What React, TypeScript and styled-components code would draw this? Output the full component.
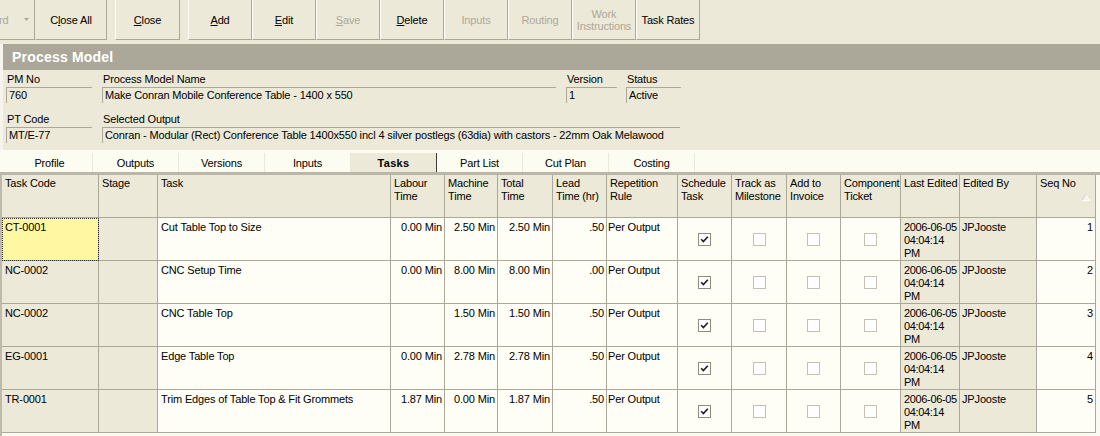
import React from "react";
import styled, { createGlobalStyle } from "styled-components";

const GlobalStyle = createGlobalStyle`
  html, body {
    margin: 0;
    padding: 0;
    background: #ece9d8;
  }
  body {
    font-family: "Liberation Sans", Arial, sans-serif;
    font-size: 11px;
    letter-spacing: -0.15px;
    color: #000;
    overflow: hidden;
  }
  * { box-sizing: border-box; }
`;

const BG = "#ece9d8";
const SHADOW = "#aca899";
const CREAM = "#fffef6";
const DISABLED = "#aca899";

const Page = styled.div`
  width: 1100px;
  height: 436px;
  overflow: hidden;
  display: flex;
  flex-direction: column;
  background: ${BG};
`;

/* ---------- Toolbar ---------- */
const Toolbar = styled.div`
  display: flex;
  height: 40px;
  flex: none;
`;

const SplitStub = styled.div`
  width: 36px;
  display: flex;
  align-items: center;
  justify-content: space-between;
  padding: 0 5px 0 0;
  border-right: 1px solid ${SHADOW};
  border-bottom: 1px solid ${SHADOW};
  color: ${DISABLED};
  margin-left: -1px;
`;

const ToolButton = styled.div<{ $w: number; $disabled?: boolean; $gapBefore?: boolean; $flushLeft?: boolean }>`
  width: ${(p) => p.$w}px;
  margin-left: ${(p) => (p.$gapBefore ? 8 : 0)}px;
  display: flex;
  align-items: center;
  justify-content: center;
  text-align: center;
  line-height: 12px;
  color: ${(p) => (p.$disabled ? DISABLED : "#000")};
  background: ${BG};
  border-left: 1px solid ${(p) => (p.$flushLeft ? "transparent" : "#ffffff")};
  border-right: 1px solid ${SHADOW};
  border-bottom: 1px solid ${SHADOW};
  white-space: nowrap;
`;

const Key = styled.span`
  text-decoration: underline;
  text-underline-offset: 1px;
`;

/* ---------- Panel ---------- */
const Panel = styled.div`
  margin-top: 4px;
  border-left: 3px solid #f6f4ec;
  display: flex;
  flex-direction: column;
`;

const TitleBar = styled.div`
  height: 26px;
  background: #aba899;
  color: #ffffff;
  font-weight: bold;
  font-size: 14px;
  letter-spacing: 0.2px;
  display: flex;
  align-items: center;
  padding-left: 9px;
`;

const Form = styled.div`
  height: 80px;
  padding: 3px 0 0 3px;
  display: flex;
  flex-direction: column;
  gap: 10px;
`;

const FormRow = styled.div`
  display: flex;
  gap: 10px;
`;

const Field = styled.div<{ $w: number; $shift?: number }>`
  width: ${(p) => p.$w}px;
  margin-left: ${(p) => p.$shift ?? 0}px;
  display: flex;
  flex-direction: column;
`;

const Label = styled.div`
  height: 14px;
  line-height: 13px;
  padding-left: 1px;
  white-space: nowrap;
`;

const ValueBox = styled.div`
  height: 16px;
  border-top: 1px solid ${SHADOW};
  border-left: 1px solid ${SHADOW};
  padding: 1px 0 0 2px;
  line-height: 13px;
  white-space: nowrap;
  overflow: hidden;
`;

/* ---------- Tabs ---------- */
const TabStrip = styled.div`
  height: 22px;
  margin-left: -3px;
  background: #fdfcf1;
  display: flex;
  align-items: flex-end;
  padding-left: 7px;
`;

const Tab = styled.div<{ $active?: boolean }>`
  width: 86px;
  height: 19px;
  display: flex;
  align-items: center;
  justify-content: center;
  font-weight: ${(p) => (p.$active ? "bold" : "normal")};
  letter-spacing: ${(p) => (p.$active ? "0.3px" : "-0.15px")};
  background: ${(p) => (p.$active ? BG : "transparent")};
  border-right: 1px solid ${(p) => (p.$active ? "#3c3b36" : "#ebe8d8")};
  padding-top: 1px;
`;

/* ---------- Grid ---------- */
const COLS = [97, 59, 233, 54, 53, 55, 54, 71, 54, 55, 54, 60, 59, 77, 59];
const TEMPLATE = COLS.map((w) => `${w}px`).join(" ");

const GridFrame = styled.div`
  border-top: 3px solid #bab7a8;
  border-left: 2px solid #bdbaab;
  background: #fbfaf2;
  flex: 1;
  display: flex;
  flex-direction: column;
`;

const GridRow = styled.div`
  display: grid;
  grid-template-columns: ${TEMPLATE};
  height: 43px;
  flex: none;
`;

const HeadCell = styled.div`
  background: ${BG};
  border-right: 1px solid ${SHADOW};
  border-bottom: 1px solid ${SHADOW};
  padding: 2px 0 0 3px;
  line-height: 13px;
  white-space: nowrap;
  overflow: hidden;
  display: flex;
  flex-direction: column;
`;

const SortMark = styled.svg`
  align-self: flex-end;
  margin: 4px 5px 0 0;
`;

type Tone = "gray" | "cream" | "focus";

const Cell = styled.div<{ $tone: Tone; $align?: "left" | "right"; $pl?: number; $tight?: boolean }>`
  background: ${(p) => (p.$tone === "gray" ? BG : p.$tone === "focus" ? "#fff7a2" : CREAM)};
  border-right: 1px solid ${SHADOW};
  border-bottom: 1px solid ${SHADOW};
  padding: 3px 2px 0 ${(p) => p.$pl ?? 3}px;
  line-height: 13px;
  text-align: ${(p) => p.$align ?? "left"};
  letter-spacing: ${(p) => (p.$tight ? "-0.35px" : "-0.15px")};
  white-space: nowrap;
  overflow: hidden;
  display: flex;
  flex-direction: column;
  align-items: ${(p) => (p.$align === "right" ? "flex-end" : "flex-start")};
  outline: ${(p) => (p.$tone === "focus" ? "1px dotted #2a2a50" : "none")};
  outline-offset: -1px;
`;

const CheckCell = styled.div`
  background: ${CREAM};
  border-right: 1px solid ${SHADOW};
  border-bottom: 1px solid ${SHADOW};
  display: flex;
  align-items: center;
  justify-content: center;
  padding-top: 1px;
`;

const Box = styled.div<{ $checked?: boolean }>`
  width: 13px;
  height: 13px;
  border: 1px solid ${(p) => (p.$checked ? "#8f8c7f" : "#c4c1b2")};
  background: #ffffff;
  display: flex;
  align-items: center;
  justify-content: center;
`;

type ColDef = {
  label: string[];
  tone: Tone;
  align?: "left" | "right";
  check?: boolean;
  sort?: boolean;
  pl?: number;
  tight?: boolean;
};

const COLUMNS: ColDef[] = [
  { label: ["Task Code"], tone: "gray" },
  { label: ["Stage"], tone: "gray" },
  { label: ["Task"], tone: "cream" },
  { label: ["Labour", "Time"], tone: "cream", align: "right" },
  { label: ["Machine", "Time"], tone: "cream", align: "right" },
  { label: ["Total", "Time"], tone: "cream", align: "right" },
  { label: ["Lead", "Time (hr)"], tone: "cream", align: "right" },
  { label: ["Repetition", "Rule"], tone: "cream", pl: 1 },
  { label: ["Schedule", "Task"], tone: "cream", check: true },
  { label: ["Track as", "Milestone"], tone: "cream", check: true },
  { label: ["Add to", "Invoice"], tone: "cream", check: true },
  { label: ["Component", "Ticket"], tone: "cream", check: true },
  { label: ["Last Edited"], tone: "gray", tight: true },
  { label: ["Edited By"], tone: "gray", pl: 2 },
  { label: ["Seq No"], tone: "cream", align: "right", sort: true },
];

type Row = (string | string[] | boolean)[];

const STAMP = ["2006-06-05", "04:04:14", "PM"];

const ROWS: Row[] = [
  ["CT-0001", "", "Cut Table Top to Size", "0.00 Min", "2.50 Min", "2.50 Min", ".50", "Per Output", true, false, false, false, STAMP, "JPJooste", "1"],
  ["NC-0002", "", "CNC Setup Time", "0.00 Min", "8.00 Min", "8.00 Min", ".00", "Per Output", true, false, false, false, STAMP, "JPJooste", "2"],
  ["NC-0002", "", "CNC Table Top", "", "1.50 Min", "1.50 Min", ".50", "Per Output", true, false, false, false, STAMP, "JPJooste", "3"],
  ["EG-0001", "", "Edge Table Top", "0.00 Min", "2.78 Min", "2.78 Min", ".50", "Per Output", true, false, false, false, STAMP, "JPJooste", "4"],
  ["TR-0001", "", "Trim Edges of Table Top & Fit Grommets", "1.87 Min", "0.00 Min", "1.87 Min", ".50", "Per Output", true, false, false, false, STAMP, "JPJooste", "5"],
];

const TABS = ["Profile", "Outputs", "Versions", "Inputs", "Tasks", "Part List", "Cut Plan", "Costing"];

const CheckMark = () => (
  <svg width="9" height="9" viewBox="0 0 9 9">
    <path d="M1.2 4.2 L3.4 6.6 L7.8 1.8" fill="none" stroke="#21211d" strokeWidth="1.7" />
  </svg>
);

export default function App() {
  return (
    <>
      <GlobalStyle />
      <Page>
        <Toolbar>
          <SplitStub>
            <span>rd</span>
            <svg width="5" height="3" viewBox="0 0 5 3">
              <path d="M0 0 H5 L2.5 3 Z" fill="#aca899" />
            </svg>
          </SplitStub>
          <ToolButton $w={72} $flushLeft>
            C<Key>l</Key>ose All
          </ToolButton>
          <ToolButton $w={65} $gapBefore>
            <Key>C</Key>lose
          </ToolButton>
          <ToolButton $w={64} $gapBefore>
            <Key>A</Key>dd
          </ToolButton>
          <ToolButton $w={64}>
            <Key>E</Key>dit
          </ToolButton>
          <ToolButton $w={64} $disabled>
            <Key>S</Key>ave
          </ToolButton>
          <ToolButton $w={64}>
            <Key>D</Key>elete
          </ToolButton>
          <ToolButton $w={64} $disabled>
            Inputs
          </ToolButton>
          <ToolButton $w={64} $disabled>
            Routing
          </ToolButton>
          <ToolButton $w={64} $disabled>
            Work
            <br />
            Instructions
          </ToolButton>
          <ToolButton $w={64}>Task Rates</ToolButton>
        </Toolbar>

        <Panel>
          <TitleBar>Process Model</TitleBar>
          <Form>
            <FormRow>
              <Field $w={86}>
                <Label>PM No</Label>
                <ValueBox>760</ValueBox>
              </Field>
              <Field $w={454}>
                <Label>Process Model Name</Label>
                <ValueBox>Make Conran Mobile Conference Table - 1400 x 550</ValueBox>
              </Field>
              <Field $w={51}>
                <Label>Version</Label>
                <ValueBox>1</ValueBox>
              </Field>
              <Field $w={55} $shift={-1}>
                <Label>Status</Label>
                <ValueBox>Active</ValueBox>
              </Field>
            </FormRow>
            <FormRow>
              <Field $w={86}>
                <Label>PT Code</Label>
                <ValueBox>MT/E-77</ValueBox>
              </Field>
              <Field $w={578}>
                <Label>Selected Output</Label>
                <ValueBox>
                  Conran - Modular (Rect) Conference Table 1400x550 incl 4 silver postlegs (63dia) with castors - 22mm Oak Melawood
                </ValueBox>
              </Field>
            </FormRow>
          </Form>

          <TabStrip>
            {TABS.map((t) => (
              <Tab key={t} $active={t === "Tasks"}>
                {t}
              </Tab>
            ))}
          </TabStrip>
        </Panel>

        <GridFrame>
          <GridRow>
            {COLUMNS.map((c, i) => (
              <HeadCell key={i}>
                {c.label.map((l, j) => (
                  <span key={j}>{l}</span>
                ))}
                {c.sort && (
                  <SortMark width="9" height="7" viewBox="0 0 9 7">
                    <path d="M4.5 0.5 L8.5 6.5 H0.5 Z" fill="#f4f2e8" stroke="#ffffff" strokeWidth="1" />
                    <path d="M4.5 0.5 L0.5 6.5" stroke="#c9c6b8" strokeWidth="1" />
                  </SortMark>
                )}
              </HeadCell>
            ))}
          </GridRow>
          {ROWS.map((r, ri) => (
            <GridRow key={ri}>
              {COLUMNS.map((c, ci) => {
                const v = r[ci];
                if (c.check) {
                  return (
                    <CheckCell key={ci}>
                      <Box $checked={v === true}>{v === true && <CheckMark />}</Box>
                    </CheckCell>
                  );
                }
                const tone: Tone = ri === 0 && ci === 0 ? "focus" : c.tone;
                const lines = Array.isArray(v) ? v : [v as string];
                return (
                  <Cell key={ci} $tone={tone} $align={c.align} $pl={c.pl} $tight={c.tight}>
                    {lines.map((l, li) => (
                      <span key={li}>{l}</span>
                    ))}
                  </Cell>
                );
              })}
            </GridRow>
          ))}
        </GridFrame>
      </Page>
    </>
  );
}
